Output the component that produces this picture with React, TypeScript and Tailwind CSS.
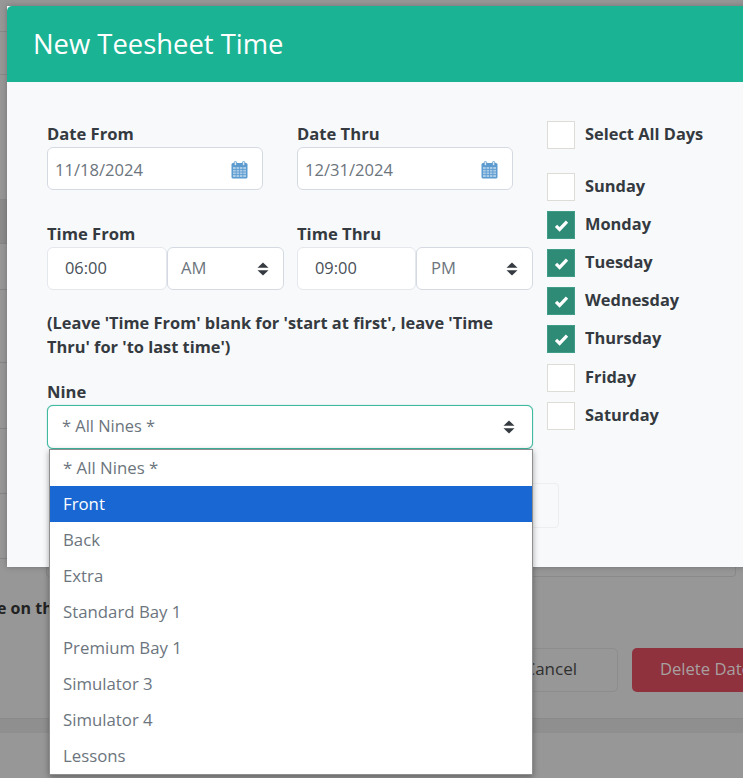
import React from "react";

const font = { fontFamily: '"Open Sans", "Noto Sans", sans-serif' };

function Updown({ className = "" }: { className?: string }) {
  return (
    <svg width="12" height="16" viewBox="0 0 12 16" className={className}>
      <path d="M6 1.5 11.5 6.8H0.5Z" fill="#343a40" />
      <path d="M6 14.5 11.5 9.2H0.5Z" fill="#343a40" />
    </svg>
  );
}

function Calendar() {
  return (
    <svg width="17" height="18" viewBox="0 0 17 18" className="relative top-[1px]">
      <rect x="0.5" y="2" width="16" height="15.5" rx="1.5" fill="#5b9bd0" />
      <rect x="2" y="6" width="13" height="10" fill="#a9cbe6" />
      <path d="M2 8.5h13M2 11h13M2 13.5h13M5.2 6v10M8.5 6v10M11.8 6v10" stroke="#5b9bd0" strokeWidth="0.8" />
      <rect x="3.2" y="0.5" width="2.4" height="4" rx="1" fill="#d5e5f2" stroke="#4f90c6" strokeWidth="0.7" />
      <rect x="11.4" y="0.5" width="2.4" height="4" rx="1" fill="#d5e5f2" stroke="#4f90c6" strokeWidth="0.7" />
    </svg>
  );
}

function DateField({ label, value, className }: { label: string; value: string; className: string }) {
  return (
    <div className={className}>
      <div className="text-[16.6px] leading-[26px] font-bold text-[#343a40] h-[26px]">{label}</div>
      <div className="h-[43px] bg-white border border-[#d5dae2] rounded-[6px] flex items-center justify-between pl-[7px] pr-[14px]">
        <span className="text-[16.6px] text-[#6c757d] relative top-[2px]">{value}</span>
        <Calendar />
      </div>
    </div>
  );
}

function TimeField({ label, time, ampm, w1, w2, pad, pad2, className }: { label: string; time: string; ampm: string; w1: string; w2: string; pad: string; pad2: string; className: string }) {
  return (
    <div className={className}>
      <div className="text-[16.6px] leading-[28px] font-bold text-[#343a40] h-[27px]">{label}</div>
      <div className="flex h-[43px]">
        <div className={`${w1} ${pad} bg-white border border-[#e4e7ec] rounded-[6px] flex items-center text-[16.4px] text-[#495057]`}>{time}</div>
        <div className={`${w2} ${pad2} bg-white border border-[#d5dae2] rounded-[6px] flex items-center justify-between pr-[14px] text-[16.6px] text-[#6c757d]`}>
          <span>{ampm}</span>
          <Updown />
        </div>
      </div>
    </div>
  );
}

function Day({ label, checked }: { label: string; checked?: boolean }) {
  return (
    <div className="flex items-center h-[28px] gap-[10px]">
      {checked ? (
        <div className="w-[28px] h-[28px] bg-[#2e8b76] border border-[#3f9c86] flex items-center justify-center">
          <svg width="15" height="13" viewBox="0 0 15 13">
            <path d="M2 6.8 5.6 10.4 13 2.6" fill="none" stroke="#fff" strokeWidth="3.2" />
          </svg>
        </div>
      ) : (
        <div className="w-[28px] h-[28px] bg-white border border-[#dedcd6]" />
      )}
      <span className="text-[16.4px] font-bold text-[#343a40] relative -top-[1px]">{label}</span>
    </div>
  );
}

const options = ["* All Nines *", "Front", "Back", "Extra", "Standard Bay 1", "Premium Bay 1", "Simulator 3", "Simulator 4", "Lessons"];

export default function App() {
  return (
    <div className="relative w-[743px] h-[778px] overflow-hidden bg-[#979797]" style={font}>
      {/* dimmed page behind the dialog */}
      <div className="flex flex-col">
        <div className="h-[32px] border-b border-[#8a8a8a]" />
        <div className="h-[43px] border-b border-[#8a8a8a]" />
        <div className="h-[125px] border-b border-[#8a8a8a]" />
        <div className="h-[44px] bg-[#8b8b8b] border-b border-[#858585]" />
        <div className="h-[46px] border-b border-[#858585]" />
        <div className="h-[73px] border-b border-[#858585]" />
        <div className="h-[66px] border-b border-[#858585]" />
        <div className="h-[65px] border-b border-[#858585]" />
        <div className="h-[65px] border-b border-[#858585]" />
        <div className="ml-[46px] mr-[7px] h-[18px] border-l border-r border-b border-[#8a8a8a] rounded-b-[4px]" />
        <div className="h-[20px]" />
        <div className="h-[22px] text-[16px] leading-[22px] font-bold text-[#222] whitespace-nowrap overflow-hidden">
          <span className="-ml-[45px] inline-block">Please on the</span>
        </div>
        <div className="h-[29px]" />
        <div className="flex justify-end gap-[14px] -mr-[69px]">
          <div className="w-[130px] h-[44px] border border-[#8d8d8d] rounded-[5px] flex items-center justify-end pr-[40px] text-[17px] text-[#303030]">
            <span className="relative -top-[1px]">Cancel</span>
          </div>
          <div className="w-[180px] h-[44px] bg-[#8f323e] rounded-[5px] flex items-center pl-[28px] text-[16.6px] text-[#a8a0a0] whitespace-nowrap">
            <span className="relative -top-[1px]">Delete Date</span>
          </div>
        </div>
        <div className="h-[26px]" />
        <div className="h-[15px] bg-[#8f8f8f] border-t border-[#8a8a8a]" />
      </div>

      {/* dialog */}
      <div className="absolute left-[7px] top-[6px] w-[760px] h-[561px] bg-[#f8f9fb] shadow-[0_0_6px_rgba(0,0,0,0.25)]">
        <div className="h-[76px] bg-[#1ab394] flex items-center pl-[26px] text-[27.4px] text-white rounded-tl-[5px]">New Teesheet Time</div>
        <div className="flex pl-[40px]">
          <div className="w-[486px] pt-[39px]">
            <div className="flex h-[99px]">
              <DateField label="Date From" value="11/18/2024" className="w-[216px] mr-[34px]" />
              <DateField label="Date Thru" value="12/31/2024" className="w-[216px]" />
            </div>
            <div className="flex h-[70px]">
              <TimeField label="Time From" time="06:00" ampm="AM" w1="w-[120px]" w2="w-[117px]" pad="pl-[17px]" pad2="pl-[13px]" className="w-[250px]" />
              <TimeField label="Time Thru" time="09:00" ampm="PM" w1="w-[119px]" w2="w-[117px]" pad="pl-[17px]" pad2="pl-[14px]" className="w-[236px]" />
            </div>
            <div className="mt-[21px] text-[16.4px] leading-[24px] font-bold text-[#343a40]">
              (Leave 'Time From' blank for 'start at first', leave 'Time Thru' for 'to last time')
            </div>
            <div className="mt-[21px] text-[16.6px] leading-[24px] font-bold text-[#343a40] h-[25px]">Nine</div>
            <div className="h-[44px] bg-white border border-[#3fb9a0] shadow-[0_0_1px_#3fb9a0] rounded-[6px] flex items-center justify-between pl-[14px] pr-[17px] text-[16.4px] text-[#6c757d]">
              <span className="relative -top-[1px]">* All Nines *</span>
              <Updown />
            </div>
          </div>
          <div className="ml-[14px] pt-[39px]">
            <div className="mb-[24px]"><Day label="Select All Days" /></div>
            <div className="flex flex-col gap-[10px]">
              <Day label="Sunday" />
              <Day label="Monday" checked />
              <Day label="Tuesday" checked />
              <Day label="Wednesday" checked />
              <Day label="Thursday" checked />
              <div className="mt-[1px]"><Day label="Friday" /></div>
              <Day label="Saturday" />
            </div>
            <div className="-ml-[60px] mt-[53px] w-[72px] h-[45px] border border-[#eceef1] rounded-[4px]" />
          </div>
        </div>
      </div>

      {/* open select list */}
      <div className="absolute left-[49px] top-[449px] w-[484px] bg-white border border-[#8f8f8f] shadow-[0_2px_6px_rgba(0,0,0,0.35)]">
        {options.map((o) => (
          <div
            key={o}
            className={`h-[36px] flex items-center pl-[13px] text-[16.8px] ${o === "Front" ? "bg-[#1967d2] text-white" : "text-[#6c757d]"}`}
          >
            {o}
          </div>
        ))}
      </div>
    </div>
  );
}
